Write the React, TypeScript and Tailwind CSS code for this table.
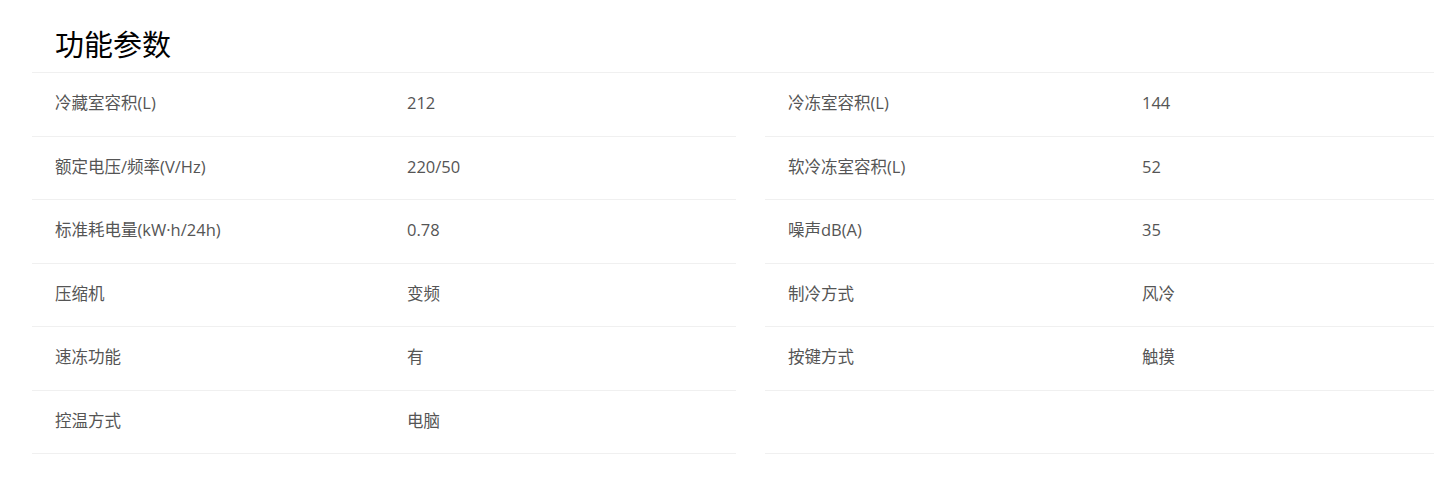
import React from "react";

const left: [string, string][] = [
  ["冷藏室容积(L)", "212"],
  ["额定电压/频率(V/Hz)", "220/50"],
  ["标准耗电量(kW·h/24h)", "0.78"],
  ["压缩机", "变频"],
  ["速冻功能", "有"],
  ["控温方式", "电脑"],
];

const right: [string, string][] = [
  ["冷冻室容积(L)", "144"],
  ["软冷冻室容积(L)", "52"],
  ["噪声dB(A)", "35"],
  ["制冷方式", "风冷"],
  ["按键方式", "触摸"],
  ["", ""],
];

function Row({ label, value, labelW }: { label: string; value: string; labelW: string }) {
  return (
    <div className="flex h-[63.5px] items-center border-b border-[#f0f0f0] pl-[23px] pb-[1px] text-[16.5px] text-[#555]">
      <div className={labelW}>{label}</div>
      <div>{value}</div>
    </div>
  );
}

export default function App() {
  return (
    <div
      className="w-[1434px] h-[477px] bg-white pl-[32px]"
      style={{ fontFamily: '"Open Sans", "Noto Sans CJK SC", sans-serif' }}
    >
      <div className="flex h-[73px] items-end border-b border-[#f0f0f0] pb-[7px] pl-[23px] text-[29px] leading-[40px] text-black">
        功能参数
      </div>
      <div className="grid grid-cols-[704px_669px] gap-x-[29px]">
        <div>
          {left.map(([l, v], i) => (
            <Row key={i} label={l} value={v} labelW="w-[352px]" />
          ))}
        </div>
        <div>
          {right.map(([l, v], i) => (
            <Row key={i} label={l} value={v} labelW="w-[354px]" />
          ))}
        </div>
      </div>
    </div>
  );
}
